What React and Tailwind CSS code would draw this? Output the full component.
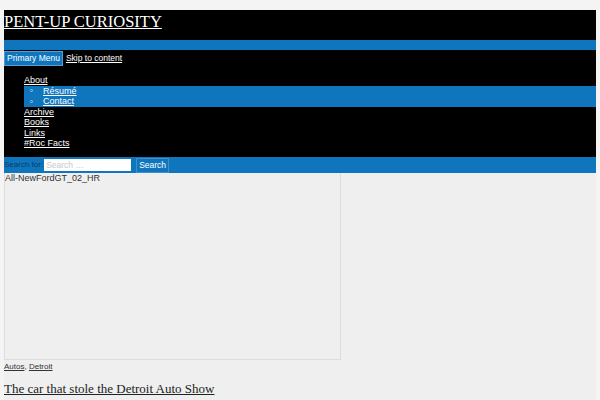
export default function App() {
  const menu = ["Archive", "Books", "Links", "#Roc Facts"];

  return (
    <div className="min-h-[400px] w-[600px] bg-[#f4f4f4] pt-[10px] font-['Liberation_Sans',Arial,sans-serif]">
      <div className="mx-[4px] bg-[#efefef] min-h-[390px]">
        {/* Header */}
        <div className="bg-black h-[30px]">
          <a className="text-white underline text-[16.5px] leading-[20px] font-['Liberation_Serif',serif]">
            PENT-UP CURIOSITY
          </a>
        </div>
        <div className="bg-[#0f76bd] h-[10px]"></div>

        {/* Navigation */}
        <div className="bg-black h-[107px] pt-[1px]">
          <div className="flex items-center gap-[3px]">
            <button className="bg-[#0f76bd] text-white text-[8.5px] leading-[11px] px-[2px] py-[1px] border border-[#5a9bd0]">
              Primary Menu
            </button>
            <a className="text-white underline text-[8.5px]">Skip to content</a>
          </div>
          <ul className="mt-[9px] text-[9px] leading-[10.5px] text-white">
            <li className="pl-[20px]">
              <a className="underline">About</a>
              <ul className="bg-[#0f76bd]">
                <li className="flex items-center pl-[6px]">
                  <span className="w-[3px] h-[3px] rounded-full border border-[#9cc8ea] mr-[10px]"></span>
                  <a className="underline">Résumé</a>
                </li>
                <li className="flex items-center pl-[6px]">
                  <span className="w-[3px] h-[3px] rounded-full border border-[#9cc8ea] mr-[10px]"></span>
                  <a className="underline">Contact</a>
                </li>
              </ul>
            </li>
            {menu.map((m) => (
              <li key={m} className="pl-[20px]">
                <a className="underline">{m}</a>
              </li>
            ))}
          </ul>
        </div>

        {/* Search */}
        <div className="bg-[#0f76bd] h-[16px] flex items-center">
          <span className="text-[#0b3a66] text-[8px] mr-[1px]">Search for:</span>
          <input
            className="bg-white w-[87px] h-[12px] text-[8.5px] px-[2px] placeholder-[#c8c8c8] outline-none"
            placeholder="Search …"
          />
          <button className="ml-[5px] h-[15px] px-[2px] text-[8.5px] text-white bg-[#0f76bd] border border-[#3f8fc9]">
            Search
          </button>
        </div>

        {/* Content */}
        <div className="w-[337px] h-[187px] border border-t-0 border-[#dcdcdc] text-[9px] leading-[11px] text-[#333]">
          All-NewFordGT_02_HR
        </div>
        <div className="mt-[2px] text-[8px] leading-[10px] text-[#333]">
          <a className="underline">Autos</a>, <a className="underline">Detroit</a>
        </div>
        <h2 className="mt-[9px] text-[13px] leading-[16px] text-[#222] font-['Liberation_Serif',serif]">
          <a className="underline">The car that stole the Detroit Auto Show</a>
        </h2>
      </div>
    </div>
  );
}
